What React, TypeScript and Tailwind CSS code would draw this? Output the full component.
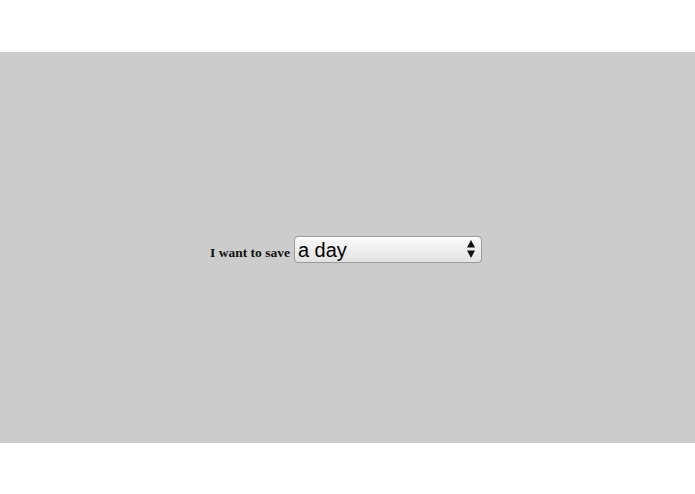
export default function App() {
  return (
    <div className="flex h-[494px] w-full flex-col bg-white">
      <div className="h-[52px] shrink-0" />
      <div className="flex h-[391px] shrink-0 items-center justify-center bg-[#cccccc] pt-[3px] pr-[3px]">
        <div className="flex items-end">
          <span className="mr-[4px] mb-[3px] font-['Liberation_Serif',serif] text-[13.5px] font-bold leading-none text-[#111]">
            I want to save
          </span>
          <div className="flex h-[27px] w-[188px] items-center justify-between rounded-[4px] border border-[#9a9a9a] bg-gradient-to-b from-[#fbfbfb] to-[#e2e2e2] pl-[3px] pr-[6px] shadow-[inset_0_1px_0_#fff]">
            <span className="mt-[2px] font-['Liberation_Sans',Arial,sans-serif] text-[20px] leading-none text-black">
              a day
            </span>
            <svg width="8" height="18" viewBox="0 0 8 18" className="shrink-0">
              <path d="M4 0 L8 7.5 L0 7.5 Z" fill="#111" />
              <path d="M0 10.5 L8 10.5 L4 18 Z" fill="#111" />
            </svg>
          </div>
        </div>
      </div>
      <div className="flex-1" />
    </div>
  );
}
